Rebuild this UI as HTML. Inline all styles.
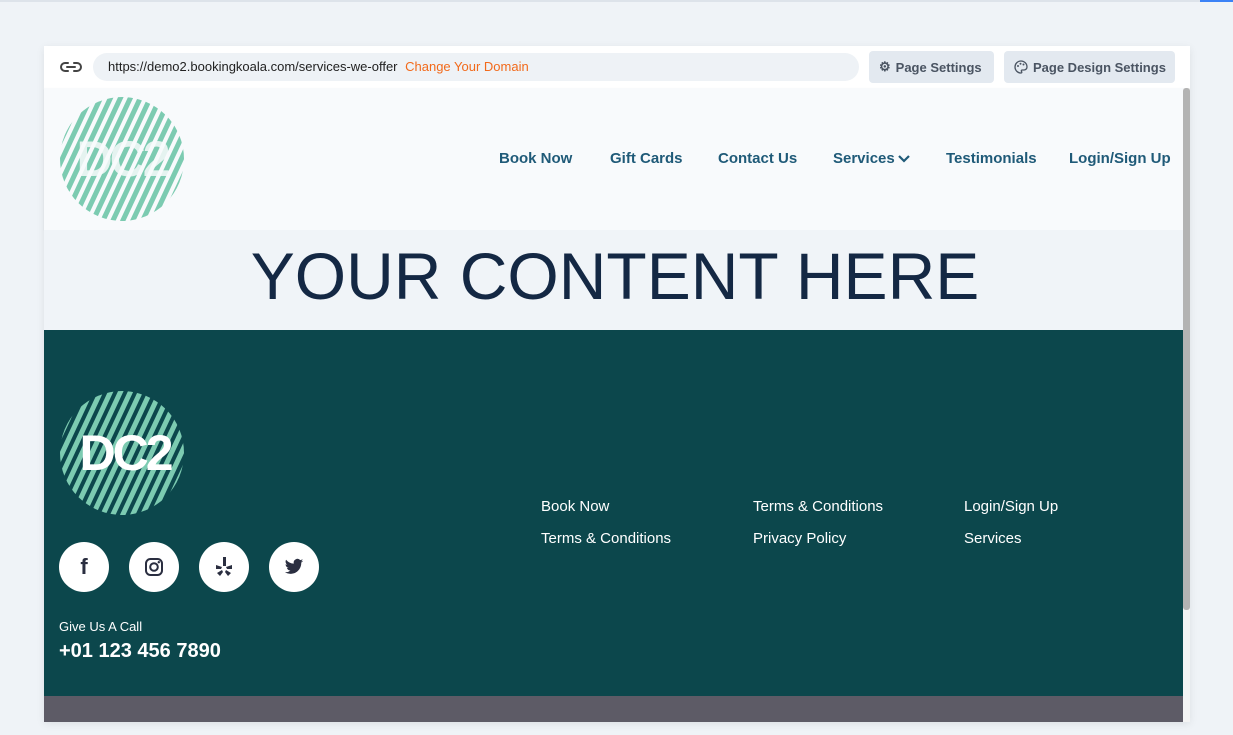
<!DOCTYPE html>
<html><head><meta charset="utf-8"><style>
*{margin:0;padding:0;box-sizing:border-box}
body{width:1233px;height:735px;background:#eff3f7;font-family:"Liberation Sans",sans-serif;position:relative;overflow:hidden}
.abs{position:absolute}
.card{left:44px;top:46px;width:1146px;height:676px;background:#fff;box-shadow:0 2px 8px rgba(0,0,0,.08)}
.nav a{position:absolute;top:150px;font-size:15px;font-weight:bold;color:#1f5a78;text-decoration:none;white-space:nowrap}
.fl{position:absolute;color:#fff;font-size:15px;white-space:nowrap}
.soc{position:absolute;top:542px;width:50px;height:50px;border-radius:50%;background:#fff;display:flex;align-items:center;justify-content:center}
.btn{position:absolute;top:51px;height:32px;background:#e3e9f0;border-radius:4px;font-size:13px;font-weight:bold;color:#4a5462;display:flex;align-items:center;gap:5px;padding-left:10px;white-space:nowrap}
</style></head><body>
<div class="abs" style="left:0;top:0;width:1233px;height:2px;background:#dde3ea"></div>
<div class="abs" style="left:1200px;top:0;width:33px;height:2px;background:#3b82f6"></div>
<div class="abs card"></div>
<svg class="abs" style="left:60px;top:58px" width="22" height="18" viewBox="0 0 22 18"><path d="M8 5H5a4 4 0 0 0 0 8h3M14 5h3a4 4 0 0 1 0 8h-3M7 9h8" stroke="#444" stroke-width="2" fill="none" stroke-linecap="round"/></svg>
<div class="abs" style="left:93px;top:53px;width:766px;height:28px;background:#eef2f6;border-radius:14px;font-size:13px;line-height:28px;padding-left:15px;color:#222;white-space:nowrap">https://demo2.bookingkoala.com/services-we-offer <span style="color:#f26a1b;margin-left:4px">Change Your Domain</span></div>
<div class="btn" style="left:869px;width:125px"><span>⚙</span>Page Settings</div>
<div class="btn" style="left:1004px;width:171px"><svg width="14" height="14" viewBox="0 0 14 14"><path d="M7 1a6 6 0 0 0 0 12c1 0 1-1 .5-1.6-.5-.7 0-1.4.8-1.4H10a3 3 0 0 0 3-3C13 3.6 10.3 1 7 1z" stroke="#4a5462" stroke-width="1.3" fill="none"/><circle cx="4" cy="6" r="1" fill="#4a5462"/><circle cx="6.5" cy="3.8" r="1" fill="#4a5462"/><circle cx="9.5" cy="4.5" r="1" fill="#4a5462"/></svg>Page Design Settings</div>
<div class="abs" style="left:44px;top:88px;width:1139px;height:142px;background:#f8fafc;box-shadow:0 1px 2px rgba(0,0,0,.06)"></div>
<svg width="0" height="0" style="position:absolute"><defs><pattern id="st" width="9" height="9" patternUnits="userSpaceOnUse" patternTransform="rotate(25)"><rect width="5" height="9" fill="#7ccbb1"/></pattern></defs></svg>
<svg class="abs" style="left:59px;top:96px" width="126" height="126"><circle cx="63" cy="63" r="62" fill="url(#st)"/><text x="63" y="80" text-anchor="middle" font-family="Liberation Sans" font-weight="bold" font-size="50" fill="#f8fafc" fill-opacity="0.85" letter-spacing="-3">DC2</text></svg>
<div class="nav"><a style="left:499px">Book Now</a><a style="left:610px">Gift Cards</a><a style="left:718px">Contact Us</a><a style="left:833px">Services<svg width="14" height="10" style="margin-left:2px" viewBox="0 0 14 10"><path d="M2 3l5 5 5-5" stroke="#1f5a78" stroke-width="2.2" fill="none"/></svg></a><a style="left:946px">Testimonials</a><a style="left:1069px">Login/Sign Up</a></div>
<div class="abs" style="left:44px;top:230px;width:1139px;height:100px;background:#f0f4f8;text-align:center;font-size:66px;line-height:92px;color:#142844;padding-left:3px">YOUR CONTENT HERE</div>
<div class="abs" style="left:44px;top:330px;width:1139px;height:366px;background:#0c474c"></div>
<svg class="abs" style="left:59px;top:390px" width="126" height="126"><circle cx="63" cy="63" r="62" fill="url(#st)"/><text x="66" y="80" text-anchor="middle" font-family="Liberation Sans" font-weight="bold" font-size="50" fill="#fff" letter-spacing="-3">DC2</text></svg>
<div class="soc" style="left:59px"><span style="font-size:22px;font-weight:bold;color:#2a2e40">f</span></div>
<div class="soc" style="left:129px"><svg width="20" height="20" viewBox="0 0 20 20"><rect x="2" y="2" width="16" height="16" rx="4.5" stroke="#2a2e40" stroke-width="2" fill="none"/><circle cx="10" cy="10" r="3.8" stroke="#2a2e40" stroke-width="2" fill="none"/><circle cx="14.8" cy="5.2" r="1.2" fill="#2a2e40"/></svg></div>
<div class="soc" style="left:199px"><svg width="20" height="22" viewBox="0 0 20 22"><path d="M9 1l3 0 0 9-3 0z M2 9l6 2-1 2-5 0z M18 9l-6 2 1 2 5 0z M3 17l5-3 1 2-3 4z M17 17l-5-3-1 2 3 4z" fill="#2a2e40"/></svg></div>
<div class="soc" style="left:269px"><svg width="20" height="18" viewBox="0 0 24 20"><path d="M23 2.5c-.8.4-1.7.6-2.6.7.9-.6 1.6-1.4 2-2.5-.9.5-1.9.9-2.9 1.1A4.5 4.5 0 0 0 11.8 6 12.8 12.8 0 0 1 2.5 1.3a4.5 4.5 0 0 0 1.4 6c-.7 0-1.4-.2-2-.6 0 2.200 1.6 4 3.6 4.4-.7.2-1.4.2-2 .1.6 1.8 2.2 3.1 4.2 3.1A9 9 0 0 1 1 16.2 12.8 12.8 0 0 0 7.9 18.2c8.3 0 12.8-6.9 12.8-12.8v-.6c.9-.6 1.700-1.4 2.3-2.3z" fill="#2a2e40"/></svg></div>
<div class="fl" style="left:59px;top:619px;font-size:13px">Give Us A Call</div>
<div class="fl" style="left:59px;top:640px;font-size:20px;font-weight:bold">+01 123 456 7890</div>
<div class="fl" style="left:541px;top:498px">Book Now</div>
<div class="fl" style="left:541px;top:530px">Terms &amp; Conditions</div>
<div class="fl" style="left:753px;top:498px">Terms &amp; Conditions</div>
<div class="fl" style="left:753px;top:530px">Privacy Policy</div>
<div class="fl" style="left:964px;top:498px">Login/Sign Up</div>
<div class="fl" style="left:964px;top:530px">Services</div>
<div class="abs" style="left:44px;top:696px;width:1139px;height:26px;background:#5d5b66"></div>
<div class="abs" style="left:1183px;top:88px;width:7px;height:634px;background:#f4f4f4"></div>
<div class="abs" style="left:1183px;top:88px;width:7px;height:522px;background:#b3b3b3;border-radius:3px"></div>
</body></html>
